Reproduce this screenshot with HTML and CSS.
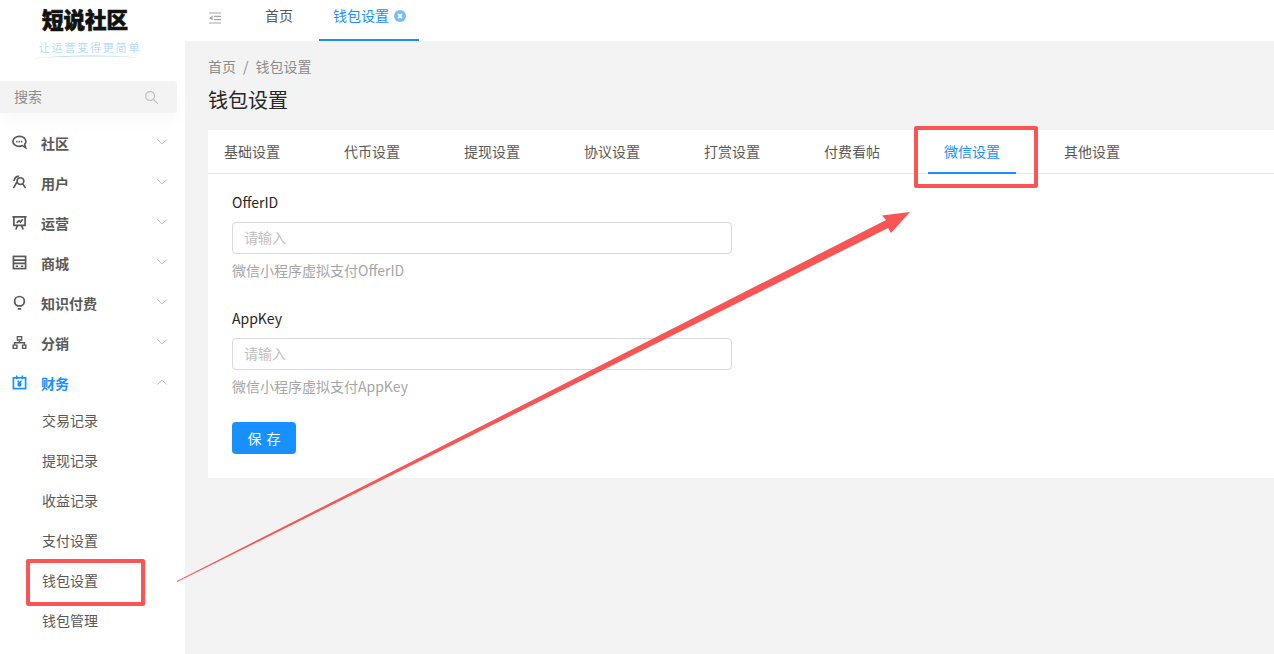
FILE: index.html
```html
<!DOCTYPE html>
<html lang="en">

<head>
    <meta charset="UTF-8">
    <title>钱包设置</title>
    <link rel="stylesheet" href="styles.css">
</head>

<body>
    <aside class="sidebar">
        <div class="logo">
            <div class="logo-title">短说社区</div>
            <div class="logo-tag">让运营变得更简单</div>
            <svg class="logo-line" viewBox="0 0 112 5" width="112" height="5"><path d="M0 4.500C30 .5 80 .5 112 4C80 2 30 2 0 4.500z" /></svg>
        </div>
        <div class="search">
            <span>搜索</span>
            <svg class="search-icon" viewBox="0 0 16 16" width="15" height="15">
                <circle cx="6.5" cy="6.5" r="4.7" />
                <path d="M10 10l4.600 4.600" />
            </svg>
        </div>
        <nav class="menu">
            <div class="menu-item">
                <svg class="menu-icon" viewBox="0 0 16 16"><path d="M7.500 1.500C4 1.500 1 3.700 1 6.800s3 5.300 6.500 5.300c1.300 0 2.500-.3 3.500-.8l3.500 2.200-1-3.700c.9-.9 1.300-1.900 1.300-3 0-3.100-3-5.300-6.300-5.300z" /><path d="M4.500 7h6.500" stroke-dasharray="1.500 1" /></svg>
                <span>社区</span>
                <svg class="chevron" viewBox="0 0 10 6"><path d="M.5.500L5 5 9.500.500" /></svg>
            </div>
            <div class="menu-item">
                <svg class="menu-icon" viewBox="0 0 16 16"><circle cx="9" cy="6.500" r="3.600" /><path d="M1.500 14l3.800-6.500M11.500 9.500l3 4.500M7.500 1.500C5 1 3 3 2 6.500" /></svg>
                <span>用户</span>
                <svg class="chevron" viewBox="0 0 10 6"><path d="M.5.500L5 5 9.500.500" /></svg>
            </div>
            <div class="menu-item">
                <svg class="menu-icon" viewBox="0 0 16 16"><path d="M.5 2h15M2 2v9h12V2M5 8.500L7.500 6 9 7.500l2.500-3M6 11l-2 4.500M10 11l2 4.500" /></svg>
                <span>运营</span>
                <svg class="chevron" viewBox="0 0 10 6"><path d="M.5.500L5 5 9.500.500" /></svg>
            </div>
            <div class="menu-item">
                <svg class="menu-icon" viewBox="0 0 16 16"><rect x="1.500" y="1.500" width="13" height="13" /><path d="M1.500 5.500h13M1.500 9h13M4 12h2.500M9.500 12H12" /></svg>
                <span>商城</span>
                <svg class="chevron" viewBox="0 0 10 6"><path d="M.5.500L5 5 9.500.500" /></svg>
            </div>
            <div class="menu-item">
                <svg class="menu-icon" viewBox="0 0 16 16"><path d="M5.800 11.500C4 10.500 2.800 8.800 2.800 6.800a5.200 5.200 0 0 1 10.400 0c0 2-1.200 3.700-3 4.700zM6.200 14.700h3.600" /></svg>
                <span>知识付费</span>
                <svg class="chevron" viewBox="0 0 10 6"><path d="M.5.500L5 5 9.500.500" /></svg>
            </div>
            <div class="menu-item">
                <svg class="menu-icon solid" viewBox="0 0 16 16"><path d="M5 1h6v5H8.700v1.500H14V10h1.500v5h-5v-5h2V9H3.500v1H6v5H.5v-5H2V7.500h5.300V6H5zM6.500 2.500v2h3v-2zM2 11.500v2h2.500v-2zM12 11.500v2h2v-2z" /></svg>
                <span>分销</span>
                <svg class="chevron" viewBox="0 0 10 6"><path d="M.5.500L5 5 9.500.500" /></svg>
            </div>
            <div class="menu-item active">
                <svg class="menu-icon" viewBox="0 0 16 16"><rect x="1.500" y="3" width="13" height="11.500" /><path d="M5 .5v4M11 .5v4M6 6l2 2.800L10 6M8 8.800v3.700M6 9.500h4M6 11.200h4" /></svg>
                <span>财务</span>
                <svg class="chevron" viewBox="0 0 10 6"><path d="M.5 5.500L5 1l4.500 4.500" /></svg>
            </div>
            <div class="submenu">
                <div class="sub-item">交易记录</div>
                <div class="sub-item">提现记录</div>
                <div class="sub-item">收益记录</div>
                <div class="sub-item">支付设置</div>
                <div class="sub-item">钱包设置</div>
                <div class="sub-item">钱包管理</div>
            </div>
        </nav>
    </aside>

    <main class="main">
        <div class="topbar">
            <svg class="fold" viewBox="0 0 12 12" width="12" height="12"><path d="M0 1h12M5 4.300h7M5 7.700h7M0 11h12" /><path class="fold-arrow" d="M3.500 3.500v5L0 6z" /></svg>
            <div class="top-tab">首页</div>
            <div class="top-tab current">
                钱包设置
                <svg class="tab-close" viewBox="0 0 12 12" width="12" height="12"><circle cx="6" cy="6" r="6" /><path d="M4 4l4 4M8 4l-4 4" /></svg>
            </div>
        </div>

        <div class="content">
            <div class="crumbs"><span>首页</span><span class="sep">/</span><span>钱包设置</span></div>
            <h1 class="page-title">钱包设置</h1>

            <div class="card">
                <div class="tabs">
                    <div class="tab">基础设置</div>
                    <div class="tab">代币设置</div>
                    <div class="tab">提现设置</div>
                    <div class="tab">协议设置</div>
                    <div class="tab">打赏设置</div>
                    <div class="tab">付费看帖</div>
                    <div class="tab selected">微信设置</div>
                    <div class="tab">其他设置</div>
                </div>
                <form class="form">
                    <div class="field">
                        <label>OfferID</label>
                        <input type="text" placeholder="请输入">
                        <div class="hint">微信小程序虚拟支付OfferID</div>
                    </div>
                    <div class="field">
                        <label>AppKey</label>
                        <input type="text" placeholder="请输入">
                        <div class="hint">微信小程序虚拟支付AppKey</div>
                    </div>
                    <button class="save" type="button">保 存</button>
                </form>
            </div>
        </div>
    </main>

    <!-- annotations drawn over the screenshot -->
    <div class="mark mark-tab"></div>
    <div class="mark mark-menu"></div>
    <svg class="arrow" viewBox="0 0 1274 654" width="1274" height="654">
        <polygon points="177,581 886,220 882,215.500 910,212 891,233 888,228 177,582" />
    </svg>
</body>

</html>
```

FILE: styles.css
```css
* {
    box-sizing: border-box;
}

body {
    margin: 0;
    height: 654px;
    overflow: hidden;
    display: flex;
    font-family: "Noto Sans CJK SC", "Noto Sans", sans-serif;
    font-size: 14px;
    color: #595959;
    background-color: #f3f3f3;
}

.sidebar {
    width: 185px;
    flex-shrink: 0;
    background-color: #fff;
}

.logo {
    height: 81px;
    padding-top: 4px;
    text-align: center;
    width: 170px;
}

.logo-title {
    font-size: 21.500px;
    line-height: 30px;
    font-weight: 900;
    color: #111;
    -webkit-text-stroke: 0.7px #111;
}

.logo-tag {
    font-size: 11px;
    line-height: 14px;
    margin-top: 6px;
    color: #b5dbf8;
    letter-spacing: 1.800px;
    text-indent: 10px;
}

.logo-line {
    display: block;
    margin: 0 0 0 33px;
    fill: #b5dbf8;
}

.search {
    width: 177px;
    height: 32px;
    padding: 0 18px 2px 14px;
    display: flex;
    align-items: center;
    justify-content: space-between;
    background-color: #f3f3f3;
    border-radius: 0 4px 4px 0;
    box-shadow: 0 10px 16px #fafafa;
    color: #8c8c8c;
}

.search-icon {
    fill: none;
    stroke: #bfbfbf;
    stroke-width: 1.300;
    margin-top: 2px;
}

.menu {
    padding-top: 10px;
}

.menu-item {
    height: 40px;
    padding-left: 12px;
    display: flex;
    align-items: center;
    font-weight: 700;
    font-size: 14px;
}

.menu-item > span {
    margin-left: 14px;
}

.menu-icon {
    width: 15px;
    height: 15px;
    margin-top: -2px;
    fill: none;
    stroke: currentColor;
    stroke-width: 1.800;
}

.menu-icon.solid {
    fill: currentColor;
    stroke: none;
}

.chevron {
    width: 10px;
    height: 6px;
    margin-left: auto;
    margin-right: 18px;
    margin-top: -3px;
    fill: none;
    stroke: #bfbfbf;
    stroke-width: 1;
}

.menu-item.active {
    color: #1890ff;
}

.sub-item {
    height: 40px;
    line-height: 34px;
    padding-left: 42px;
    font-size: 14px;
}

.main {
    flex: 1;
    min-width: 0;
}

.topbar {
    height: 41px;
    background-color: #fff;
    display: flex;
    padding-left: 24px;
}

.fold {
    margin-top: 12px;
    fill: none;
    stroke: #a6a6a6;
    stroke-width: 1.200;
}

.fold-arrow {
    fill: #a6a6a6;
    stroke: none;
}

.top-tab {
    height: 41px;
    line-height: 31px;
    padding: 0 26px 0 44px;
    color: #595959;
    white-space: nowrap;
}

.top-tab.current {
    padding: 0 13px 0 14px;
    color: #1890ff;
    border-bottom: 2px solid #1890ff;
}

.tab-close {
    vertical-align: -1px;
    margin-left: 2px;
    fill: #75bcfa;
}

.tab-close path {
    fill: none;
    stroke: #fff;
    stroke-width: 1.800;
}

.content {
    padding: 15px 0 0 23px;
}

.crumbs {
    line-height: 20px;
    color: #8c8c8c;
}

.sep {
    margin: 0 7px;
}

.page-title {
    margin: 10px 0 0;
    font-size: 20px;
    line-height: 28px;
    font-weight: 400;
    color: #262626;
}

.card {
    margin-top: 16px;
    height: 348px;
    background-color: #fff;
}

.tabs {
    height: 44px;
    display: flex;
    border-bottom: 1px solid #e8e8e8;
}

.tab {
    width: 88px;
    height: 44px;
    margin-right: 32px;
    line-height: 42px;
    text-align: center;
    flex-shrink: 0;
}

.tab.selected {
    color: #1890ff;
    border-bottom: 2px solid #1890ff;
}

.form {
    padding: 16px 24px;
}

.field {
    margin-bottom: 25px;
}

.field label {
    display: block;
    line-height: 24px;
    margin-bottom: 8px;
    color: #262626;
}

.field input {
    display: block;
    width: 500px;
    height: 32px;
    padding: 0 11px 2px;
    border: 1px solid #d9d9d9;
    border-radius: 4px;
    font: inherit;
    background-color: #fff;
}

.field input::placeholder {
    color: #bfbfbf;
}

.hint {
    line-height: 22px;
    margin-top: 5px;
    color: #a6a6a6;
}

.save {
    width: 64px;
    height: 32px;
    padding: 0;
    border: 0;
    border-radius: 4px;
    font: inherit;
    word-spacing: 2px;
    color: #fff;
    background-color: #1890ff;
}

.mark {
    position: absolute;
    border: 4px solid #fa5454;
    border-radius: 2px;
}

.mark-tab {
    left: 914px;
    top: 126px;
    width: 124px;
    height: 62px;
}

.mark-menu {
    left: 26px;
    top: 559px;
    width: 119px;
    height: 47px;
}

.arrow {
    position: absolute;
    left: 0;
    top: 0;
    fill: #fa5454;
    pointer-events: none;
}
```
